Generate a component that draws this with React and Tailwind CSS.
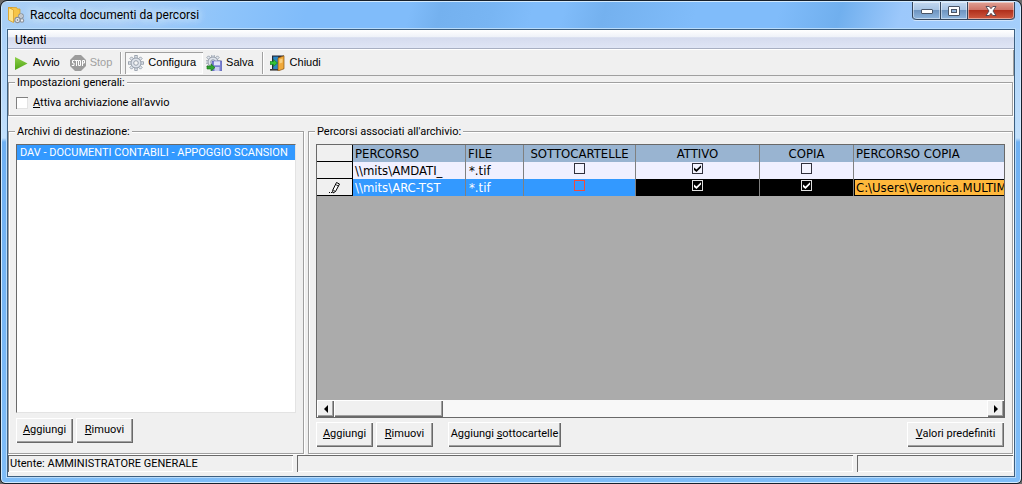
import { useState } from 'react';
import clsx from 'clsx';

const UI_FONT = 'font-["Roboto","Liberation_Sans",sans-serif]';
const TOOLBAR_FONT = 'font-["Liberation_Sans",Arial,sans-serif]';
const GRID_FONT = 'font-["DejaVu_Sans_Condensed","DejaVu_Sans",sans-serif]';

const initialRows = [
  {
    id: 1,
    percorso: '\\\\mits\\AMDATI_',
    file: '*.tif',
    sottocartelle: false,
    attivo: true,
    copia: false,
    percorsoCopia: '',
  },
  {
    id: 2,
    percorso: '\\\\mits\\ARC-TST',
    file: '*.tif',
    sottocartelle: false,
    attivo: true,
    copia: true,
    percorsoCopia: 'C:\\Users\\Veronica.MULTIM',
  },
];

const archives = ['DAV - DOCUMENTI CONTABILI - APPOGGIO SCANSION'];

function AppIcon() {
  return (
    <svg width="18" height="18" viewBox="0 0 18 18" aria-hidden="true">
      <path d="M1 1h4l1.500 1.500V14H1z" fill="#e0a72c" />
      <path d="M4 1.500h5.500l1 1.500H13v12H4z" fill="#f6c548" stroke="#d39a22" strokeWidth=".7" />
      <path d="M1.500 1.500 6.500 4v12.500l-5-2.500z" fill="#ffe48a" stroke="#d8a02a" strokeWidth=".8" />
      <g fill="#eef1f5" stroke="#8b929c" strokeWidth="1.100">
        <circle cx="14" cy="10" r="2.300" />
        <circle cx="10.500" cy="14" r="2.600" />
        <circle cx="15" cy="14.500" r="1.700" />
      </g>
      <circle cx="10.500" cy="14" r=".9" fill="#8b929c" />
      <circle cx="14" cy="10" r=".8" fill="#8b929c" />
    </svg>
  );
}

function PlayIcon() {
  return (
    <svg width="16" height="16" viewBox="0 0 16 16" aria-hidden="true">
      <defs>
        <linearGradient id="play" x1="0" y1="0" x2="0" y2="1">
          <stop offset="0" stopColor="#8fd04a" />
          <stop offset="1" stopColor="#4fa516" />
        </linearGradient>
      </defs>
      <path d="M2 2v13L14.500 8.500z" fill="url(#play)" />
    </svg>
  );
}

function StopIcon() {
  return (
    <svg width="16" height="16" viewBox="0 0 16 16" aria-hidden="true">
      <path d="M5 0h6l5 5v6l-5 5H5l-5-5V5z" fill="#9c9c9c" />
      <g fill="none" stroke="#fff" strokeWidth="1">
        <path d="M4.500 5.500H2.500V8H4v2.500H1.800" />
        <path d="M5 5.500h3M6.500 5.500V11" />
        <path d="M8.500 5.500h2v5h-2z" />
        <path d="M12.500 11V5.500h2V8h-2" />
      </g>
    </svg>
  );
}

const GEAR_TEETH = [0, 45, 90, 135, 180, 225, 270, 315];

function Gear() {
  return (
    <g>
      {GEAR_TEETH.map((angle) => (
        <rect
          key={angle}
          x="6.800"
          y=".5"
          width="2.400"
          height="3"
          fill="#e3e8ef"
          stroke="#8d96a3"
          strokeWidth=".8"
          transform={`rotate(${angle} 8 8)`}
        />
      ))}
      <circle cx="8" cy="8" r="5" fill="#dfe4ec" stroke="#8d96a3" strokeWidth=".9" />
      <circle cx="8" cy="8" r="2.300" fill="#f6f6f6" stroke="#8d96a3" strokeWidth=".9" />
    </g>
  );
}

function ConfigIcon() {
  return (
    <svg width="16" height="16" viewBox="0 0 16 16" aria-hidden="true">
      <Gear />
    </svg>
  );
}

function SaveIcon() {
  return (
    <svg width="16" height="16" viewBox="0 0 16 16" aria-hidden="true">
      <g transform="translate(-1 -1)">
        <Gear />
      </g>
      <rect x="6" y="6" width="10" height="10" fill="#7a80d0" stroke="#5a60b0" strokeWidth=".6" />
      <rect x="8" y="6.300" width="6" height="4" fill="#dfe2fb" />
      <rect x="8.500" y="12" width="5" height="4" fill="#c9cdf0" />
      <path d="M1 11h4V9l4 3.500L5 16v-2H1z" fill="#2fa52f" stroke="#157015" strokeWidth=".6" />
    </svg>
  );
}

function ExitIcon() {
  return (
    <svg width="16" height="16" viewBox="0 0 16 16" aria-hidden="true">
      <rect x="2" y=".5" width="12" height="13.500" fill="#252a3a" />
      <rect x="3.200" y="1.600" width="5" height="12.400" fill="#2a86c4" />
      <path d="M8 3 14 .8v13L8 16z" fill="#f0a93a" stroke="#8a5310" strokeWidth=".7" />
      <path d="M9.500 4.500 12.500 3.400v4L9.500 8.400z" fill="#f8cf80" />
      <rect x="0" y="14" width="8" height="1.600" fill="#3d3d3d" />
      <path d="M0 6.500h3.500v-2L7.500 8l-4 3.500v-2H0z" fill="#35c035" stroke="#0f7a1e" strokeWidth=".6" />
    </svg>
  );
}

function PencilIcon() {
  return (
    <svg width="12" height="13" viewBox="0 0 12 13" aria-hidden="true">
      <path d="M3.500 9.500 7.500 1.500l3 1.500-4 7.500-2.500 1.500z" fill="#fff" stroke="#000" strokeWidth="1" />
      <path d="M6.500 3.500l3 1.500M4 9l2.500 1.500" stroke="#000" strokeWidth=".8" />
      <path d="M0 11h1v1H0zM2 11h1v1H2z" fill="#000" />
    </svg>
  );
}

function WindowButtons() {
  const base =
    'flex h-[18px] items-center justify-center border-b border-[#33465e] shadow-[inset_0_0_0_1px_rgba(255,255,255,0.45)]';
  const glass =
    'bg-[linear-gradient(#c3d8ef_0%,#a9c5e4_45%,#6f95c0_50%,#8fb6df_100%)]';
  return (
    <div className="flex rounded-b-[4px] border-x border-[#33465e] shadow-[0_1px_0_#cfe4fb]">
      <button aria-label="Riduci a icona" className={clsx(base, glass, 'w-[28px] rounded-bl-[4px] border-r')}>
        <svg width="12" height="9" viewBox="0 0 12 9">
          <rect x=".5" y="3.500" width="11" height="4" rx=".5" fill="#fff" stroke="#4a5567" />
        </svg>
      </button>
      <button aria-label="Ingrandisci" className={clsx(base, glass, 'w-[27px] border-r')}>
        <svg width="12" height="10" viewBox="0 0 12 10">
          <rect x=".5" y=".5" width="11" height="9" rx=".5" fill="#fff" stroke="#4a5567" />
          <rect x="3.500" y="3.500" width="5" height="3" fill="#8fb3dc" stroke="#4a5567" />
        </svg>
      </button>
      <button
        aria-label="Chiudi finestra"
        className={clsx(
          base,
          'w-[46px] rounded-br-[4px] bg-[linear-gradient(#e0a195_0%,#cf7568_45%,#b0301c_50%,#cf5a40_100%)]'
        )}
      >
        <svg width="12" height="10" viewBox="0 0 12 10">
          <path
            d="M1 .5h3.200L6 2.700 7.800.5H11L8 5l3 4.500H7.800L6 7.300 4.200 9.500H1L4 5z"
            fill="#fff"
            stroke="#4b4350"
            strokeWidth=".9"
          />
        </svg>
      </button>
    </div>
  );
}

function ToolButton({ icon, label, pressed, disabled }) {
  return (
    <button
      disabled={disabled}
      aria-pressed={pressed}
      className={clsx(
        'flex h-[22px] items-center gap-1 pr-[7px] pl-[3px] text-[11px]',
        TOOLBAR_FONT,
        disabled ? 'text-[#a0a0a0]' : 'text-black',
        pressed && 'bg-[#f7f7f7] shadow-[inset_1px_1px_0_#a0a0a0,inset_-1px_-1px_0_#fff]'
      )}
    >
      {icon}
      {label}
    </button>
  );
}

function ToolSeparator() {
  return <div className="mr-[3px] ml-px h-[22px] w-[2px] border-r border-l border-r-white border-l-[#a0a0a0]" />;
}

function PushButton({ children, className }) {
  return (
    <button
      className={clsx(
        'h-[25px] bg-[#f0f0f0] pb-px text-[11px] shadow-[inset_1px_1px_0_#fff,inset_-1px_-1px_0_#696969,inset_-2px_-2px_0_#a0a0a0]',
        className
      )}
    >
      {children}
    </button>
  );
}

function GroupBox({ title, className, children }) {
  return (
    <fieldset
      className={clsx(
        'min-w-0 border border-[#a0a0a0] px-[7px] shadow-[1px_1px_0_#fff,inset_1px_1px_0_#fff]',
        className
      )}
    >
      <legend className="-ml-px bg-[#f0f0f0] px-[2px] text-[11px] leading-[13px]">{title}</legend>
      {children}
    </fieldset>
  );
}

function GridCheck({ label, checked, onChange, tone }) {
  return (
    <label className="relative mx-auto mb-[5px] block size-[11px]">
      <input
        type="checkbox"
        aria-label={label}
        checked={checked}
        onChange={onChange}
        className={clsx(
          'block size-[11px] appearance-none border',
          tone === 'light' && 'border-[#30303c] bg-[#f4f4ff]',
          tone === 'red' && 'border-[#f04a3c]',
          tone === 'dark' && 'border-[#e0e0e0] bg-black'
        )}
      />
      {checked && (
        <svg
          className={clsx('pointer-events-none absolute inset-0', tone === 'dark' ? 'text-white' : 'text-black')}
          width="11"
          height="11"
          viewBox="0 0 11 11"
        >
          <path d="M2 4.500v2.500l2.500 2L9 4.500V2.200L4.500 6.500z" fill="currentColor" />
        </svg>
      )}
    </label>
  );
}

function ScrollArrow({ label, d }) {
  return (
    <button
      aria-label={label}
      className="flex w-[17px] items-center justify-center bg-[#f0f0f0] shadow-[inset_1px_1px_0_#fff,inset_-1px_-1px_0_#696969,inset_-2px_-2px_0_#a0a0a0]"
    >
      <svg width="12" height="12" viewBox="0 0 12 12">
        <path d={d} fill="#000" />
      </svg>
    </button>
  );
}

function PathsGrid() {
  const [rows, setRows] = useState(initialRows);
  const selectedId = 2;

  const toggle = (id, key) =>
    setRows((prev) => prev.map((row) => (row.id === id ? { ...row, [key]: !row[key] } : row)));

  const head = 'h-[17px] overflow-hidden bg-[#99b4d1] p-0 font-normal';
  const cell = 'h-[17px] overflow-hidden p-0';
  const line = 'border-r border-[#808080]';

  return (
    <div className="flex min-h-0 flex-1 flex-col border border-[#696969] bg-[#ababab]">
      <div className="flex-1 overflow-hidden">
        <table
          className={clsx(
            'w-full table-fixed border-separate border-spacing-0 text-[13px] leading-[16px] whitespace-nowrap',
            GRID_FONT
          )}
        >
          <colgroup>
            <col className="w-[36px]" />
            <col className="w-[113px]" />
            <col className="w-[58px]" />
            <col className="w-[112px]" />
            <col className="w-[124px]" />
            <col className="w-[94px]" />
            <col />
          </colgroup>
          <thead>
            <tr>
              <td className="h-[17px] border-r border-b border-black bg-[#f0f0f0] p-0" />
              <th className={clsx(head, line, 'pl-[2px] text-left')}>PERCORSO</th>
              <th className={clsx(head, line, 'pl-[2px] text-left')}>FILE</th>
              <th className={clsx(head, line)}>SOTTOCARTELLE</th>
              <th className={clsx(head, line)}>ATTIVO</th>
              <th className={clsx(head, line)}>COPIA</th>
              <th className={clsx(head, 'pl-[2px] text-left')}>PERCORSO COPIA</th>
            </tr>
          </thead>
          <tbody>
            {rows.map((row) => {
              const selected = row.id === selectedId;
              const base = clsx(cell, line, selected ? 'bg-[#3399ff] text-white' : 'bg-[#f0f0ff]');
              const flag = clsx(cell, line, selected ? 'bg-black' : 'bg-[#f0f0ff]');
              return (
                <tr key={row.id}>
                  <td className="h-[17px] border-r border-b border-black bg-[#f0f0f0] p-0">
                    {selected && (
                      <div className="flex justify-center">
                        <PencilIcon />
                      </div>
                    )}
                  </td>
                  <td className={clsx(base, 'pl-[2px]')}>{row.percorso}</td>
                  <td className={clsx(base, 'pl-[3px]')}>{row.file}</td>
                  <td className={base}>
                    <GridCheck
                      label="Sottocartelle"
                      checked={row.sottocartelle}
                      onChange={() => toggle(row.id, 'sottocartelle')}
                      tone={selected ? 'red' : 'light'}
                    />
                  </td>
                  <td className={flag}>
                    <GridCheck
                      label="Attivo"
                      checked={row.attivo}
                      onChange={() => toggle(row.id, 'attivo')}
                      tone={selected ? 'dark' : 'light'}
                    />
                  </td>
                  <td className={flag}>
                    <GridCheck
                      label="Copia"
                      checked={row.copia}
                      onChange={() => toggle(row.id, 'copia')}
                      tone={selected ? 'dark' : 'light'}
                    />
                  </td>
                  <td
                    className={clsx(
                      cell,
                      'pl-[2px]',
                      selected
                        ? 'bg-[#ffb83c] shadow-[inset_0_1px_0_#000,inset_0_-1px_0_#000,inset_1px_0_0_#000]'
                        : 'bg-[#f0f0ff]'
                    )}
                  >
                    {row.percorsoCopia}
                  </td>
                </tr>
              );
            })}
          </tbody>
        </table>
      </div>
      <div className="flex h-[17px] shrink-0 bg-[#f8f8f8]">
        <ScrollArrow label="Scorri a sinistra" d="M8 2v8L4 6z" />
        <div className="w-[109px] bg-[#f0f0f0] shadow-[inset_1px_1px_0_#fff,inset_-1px_-1px_0_#696969,inset_-2px_-2px_0_#a0a0a0]" />
        <div className="flex-1" />
        <ScrollArrow label="Scorri a destra" d="M4 2v8l4-4z" />
      </div>
    </div>
  );
}

function StatusCell({ className, children }) {
  return (
    <div
      className={clsx(
        'h-[17px] overflow-hidden pl-[2px] text-[11px] leading-[18px] whitespace-nowrap shadow-[inset_1px_1px_0_#696969,inset_-1px_-1px_0_#fff]',
        className
      )}
    >
      {children}
    </div>
  );
}

export default function App() {
  const [autoStart, setAutoStart] = useState(false);

  return (
    <div className="bg-[#6a6a6a]">
      <div className={clsx('h-screen overflow-hidden rounded-t-[7px] rounded-b-[5px] border border-[#16202c] text-black', UI_FONT)}>
        <div className="flex h-full flex-col rounded-t-[6px] rounded-b-[4px] border border-[#d3eafd] bg-[linear-gradient(#a5cdf8_0px,#c2e0fc_136px,#6fb0f2_140px,#7fbdf8_100%)] px-[5px] pb-[5px]">
          <header className="-mx-[5px] flex h-[27px] shrink-0 items-start justify-between rounded-t-[5px] bg-[linear-gradient(105deg,#a9cff5_0%,#a6cdf7_12%,#8ec4fa_22%,#80bcfa_30%,#80bcfa_40%,#74b1ef_43%,#78b5f3_48%,#80bcfa_52%,#80bcfa_55%,#74b1ef_59%,#80bcfa_68%,#80bcfa_76%,#70afee_82%,#9cc8fb_88%,#a5cffb_100%)] px-[5px]">
            <div className="flex items-center gap-[5px] pt-[4px]">
              <AppIcon />
              <h1 className="text-[12px] leading-[18px] [text-shadow:0_0_8px_#e6f3ff,0_0_8px_#e6f3ff]">
                Raccolta documenti da percorsi
              </h1>
            </div>
            <WindowButtons />
          </header>

          <main className="flex min-h-0 flex-1 flex-col border border-[#3d5f80] bg-[#f0f0f0] shadow-[0_0_0_1px_#b9dcfb]">
            <nav className="flex h-[20px] shrink-0 items-center border-b border-white bg-[linear-gradient(#ffffff_0%,#eef1f8_38%,#d5dbee_40%,#dfe5f5_94%,#a8afc2_94%)]">
              <button className="px-[7px] text-[12px] leading-[18px]">Utenti</button>
            </nav>

            <div className="flex h-[26px] shrink-0 items-center border-r border-b border-[#a0a0a0] pl-[2px]">
              <ToolButton icon={<PlayIcon />} label="Avvio" />
              <ToolButton icon={<StopIcon />} label="Stop" disabled />
              <ToolSeparator />
              <ToolButton icon={<ConfigIcon />} label="Configura" pressed />
              <ToolButton icon={<SaveIcon />} label="Salva" />
              <ToolSeparator />
              <ToolButton icon={<ExitIcon />} label="Chiudi" />
            </div>

            <GroupBox title="Impostazioni generali:" className="mr-px h-[40px] shrink-0">
              <label className="flex items-center gap-[5px] pt-[7px] text-[11px] leading-[13px]">
                <input
                  type="checkbox"
                  checked={autoStart}
                  onChange={(e) => setAutoStart(e.target.checked)}
                  className="size-[12px] appearance-none bg-white shadow-[inset_1px_1px_0_#808080,inset_-1px_-1px_0_#e3e3e3] checked:bg-[#3399ff]"
                />
                <span>
                  <u>A</u>ttiva archiviazione all'avvio
                </span>
              </label>
            </GroupBox>

            <div className="mt-[9px] mr-px flex min-h-0 flex-1 gap-1">
              <GroupBox title="Archivi di destinazione:" className="flex w-[296px] shrink-0 flex-col pb-[10px]">
                <ul
                  role="listbox"
                  aria-label="Archivi di destinazione"
                  className="mt-[6px] min-h-0 flex-1 overflow-hidden border border-t-[#696969] border-r-[#e3e3e3] border-b-[#e3e3e3] border-l-[#696969] bg-white"
                >
                  {archives.map((name) => (
                    <li
                      key={name}
                      role="option"
                      aria-selected="true"
                      className="h-[15px] overflow-hidden bg-[#3399ff] pl-[3px] text-[11px] leading-[16px] whitespace-nowrap text-white"
                    >
                      {name}
                    </li>
                  ))}
                </ul>
                <div className="mt-[5px] flex gap-[3px]">
                  <PushButton className="w-[57px]">
                    <u>A</u>ggiungi
                  </PushButton>
                  <PushButton className="w-[57px]">
                    <u>R</u>imuovi
                  </PushButton>
                </div>
              </GroupBox>

              <GroupBox title="Percorsi associati all'archivio:" className="flex flex-1 flex-col pb-[6px]">
                <div className="mt-[6px] flex min-h-0 flex-1 flex-col">
                  <PathsGrid />
                </div>
                <div className="mt-[4px] flex gap-[3px] pr-px">
                  <PushButton className="w-[57px]">
                    <u>A</u>ggiungi
                  </PushButton>
                  <PushButton className="w-[57px]">
                    <u>R</u>imuovi
                  </PushButton>
                  <PushButton className="ml-[12px] w-[113px]">
                    Aggiungi <u>s</u>ottocartelle
                  </PushButton>
                  <PushButton className="ml-auto w-[97px]">
                    <u>V</u>alori predefiniti
                  </PushButton>
                </div>
              </GroupBox>
            </div>

            <footer className="flex shrink-0 gap-1 pt-px pr-px pb-[4px]">
              <StatusCell className="w-[285px]">Utente: AMMINISTRATORE GENERALE</StatusCell>
              <StatusCell className="flex-1" />
              <StatusCell className="w-[156px]" />
            </footer>
          </main>
        </div>
      </div>
    </div>
  );
}
